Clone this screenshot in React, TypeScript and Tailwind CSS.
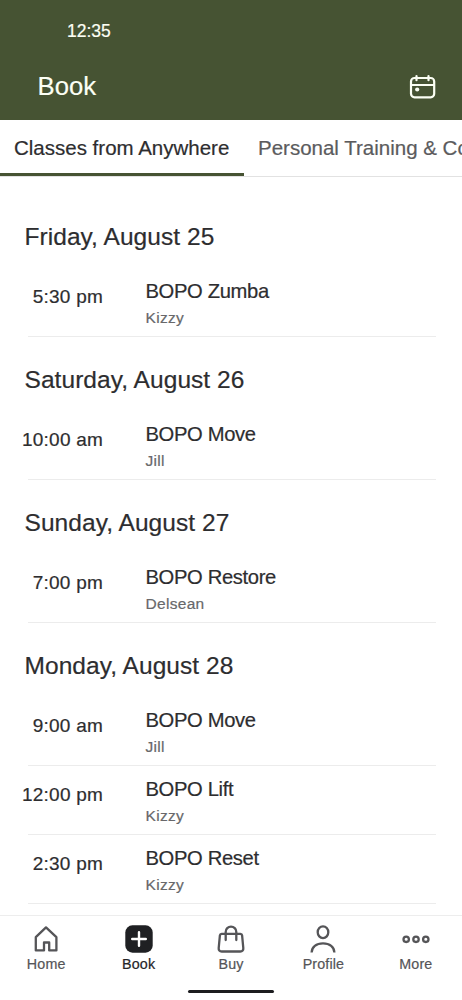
import type { ReactNode } from "react";

type Item = { time: string; name: string; coach: string };

const days: { label: string; items: Item[] }[] = [
  { label: "Friday, August 25", items: [{ time: "5:30 pm", name: "BOPO Zumba", coach: "Kizzy" }] },
  { label: "Saturday, August 26", items: [{ time: "10:00 am", name: "BOPO Move", coach: "Jill" }] },
  { label: "Sunday, August 27", items: [{ time: "7:00 pm", name: "BOPO Restore", coach: "Delsean" }] },
  {
    label: "Monday, August 28",
    items: [
      { time: "9:00 am", name: "BOPO Move", coach: "Jill" },
      { time: "12:00 pm", name: "BOPO Lift", coach: "Kizzy" },
      { time: "2:30 pm", name: "BOPO Reset", coach: "Kizzy" },
    ],
  },
];

function Icon({ children }: { children: ReactNode }) {
  return (
    <svg width="30" height="30" viewBox="0 0 30 30" fill="none" stroke="currentColor" strokeWidth="2.3" className="shrink-0">
      {children}
    </svg>
  );
}

const tabs: { label: string; active?: boolean; icon: ReactNode }[] = [
  {
    label: "Home",
    icon: <path d="M4.8 26.4V13.2L15 3.4l10.400 9.800v13.200h-7.200v-7.900h-5.200v7.900z" strokeLinejoin="round" />,
  },
  {
    label: "Book",
    active: true,
    icon: (
      <>
        <rect x="1.3" y="1.3" width="27.4" height="27.4" rx="7.2" fill="#1f2023" stroke="none" />
        <path d="M15 8.200v13.600M8.200 15h13.600" stroke="white" strokeWidth="2.4" strokeLinecap="round" />
      </>
    ),
  },
  {
    label: "Buy",
    icon: (
      <>
        <path d="M5.600 9.900h18.800c1 0 1.600.6 1.700 1.500l1.200 12.600c.2 2.200-.9 3.500-3 3.500H5.700c-2.100 0-3.200-1.300-3-3.500l1.200-12.600c.1-.9.700-1.500 1.700-1.500z" />
        <path d="M9.700 16V7.900a5.300 5.300 0 0 1 10.600 0V16" strokeLinecap="round" />
      </>
    ),
  },
  {
    label: "Profile",
    icon: (
      <>
        <ellipse cx="15" cy="8.200" rx="5.300" ry="5.900" />
        <path d="M3.600 28.600c.1-5.700 4.700-9.300 11.400-9.300s11.300 3.600 11.400 9.300" />
      </>
    ),
  },
  {
    label: "More",
    icon: (
      <>
        <circle cx="5.200" cy="15.300" r="2.700" />
        <circle cx="15" cy="15.300" r="2.700" />
        <circle cx="24.800" cy="15.300" r="2.700" />
      </>
    ),
  },
];

export default function App() {
  return (
    <div className="flex h-[1000px] w-[462px] flex-col overflow-hidden bg-white font-['Liberation_Sans',Arial,sans-serif] text-[#2d2d2f] [-webkit-text-stroke:0.2px_currentColor]">
      <header className="h-[120px] shrink-0 bg-[#465333] text-[#fcfff5]">
        <div className="pt-[21px] pl-[67px] text-[17.5px] leading-5">12:35</div>
        <div className="mt-[30px] flex h-[31px] items-center justify-between pr-[26px] pl-[37.5px]">
          <h1 className="pb-[1px] text-[25.7px] leading-[30px]">Book</h1>
          <svg width="27" height="26" viewBox="0 0 27 26" fill="none" stroke="currentColor" strokeWidth="2.200" strokeLinecap="round">
            <rect x="2" y="4" width="23.200" height="19.300" rx="3.500" />
            <path d="M2 11h23M7.500 2v4.200M19.500 2v4.200" />
            <circle cx="8.200" cy="15.500" r="2.100" fill="currentColor" stroke="none" />
          </svg>
        </div>
      </header>

      <nav className="flex h-[57px] shrink-0 overflow-hidden border-b border-[#e2e2e2] text-[20.5px] leading-[56px] whitespace-nowrap">
        <div className="h-[56.5px] w-[244px] shrink-0 border-b-4 border-[#465333] pl-[14px]">Classes from Anywhere</div>
        <div className="shrink-0 pl-[14px] text-[#5b5b5d]">Personal Training &amp; Coaching</div>
      </nav>

      <main className="min-h-0 flex-1 overflow-hidden pt-[17px] pr-[26px] pl-[25px]">
        {days.map((day) => (
          <section key={day.label}>
            <h2 className="-ml-[0.5px] h-[74px] pt-[28px] text-[24.5px] leading-[30px] tracking-[0.06px]">{day.label}</h2>
            {day.items.map((item) => (
              <div key={item.time} className="ml-[3px] flex h-[69px] border-b border-[#ececec]">
                <div className="-ml-[18px] w-[93px] shrink-0 pt-[17px] text-right text-[19px] leading-6 tracking-[0.22px]">{item.time}</div>
                <div className="pt-[11px] pl-[42.5px]">
                  <div className="text-[20.2px] leading-6 tracking-[-0.35px]">{item.name}</div>
                  <div className="mt-[5px] text-[15.5px] leading-5 tracking-[0.3px] text-[#68686a]">{item.coach}</div>
                </div>
              </div>
            ))}
          </section>
        ))}
      </main>

      <footer className="flex h-[85px] shrink-0 flex-col border-t border-[#ededed]">
        <div className="flex h-[74px] pt-[8px]">
          {tabs.map((t) => (
            <div key={t.label} className={`flex flex-1 flex-col items-center text-[14.3px] leading-5 tracking-[0.15px] ${t.active ? "text-[#252528]" : "text-[#555558]"}`}>
              <Icon>{t.icon}</Icon>
              <span>{t.label}</span>
            </div>
          ))}
        </div>
        <div className="mx-auto h-[3px] w-[86px] rounded-full bg-[#1c1c1f]" />
      </footer>
    </div>
  );
}
